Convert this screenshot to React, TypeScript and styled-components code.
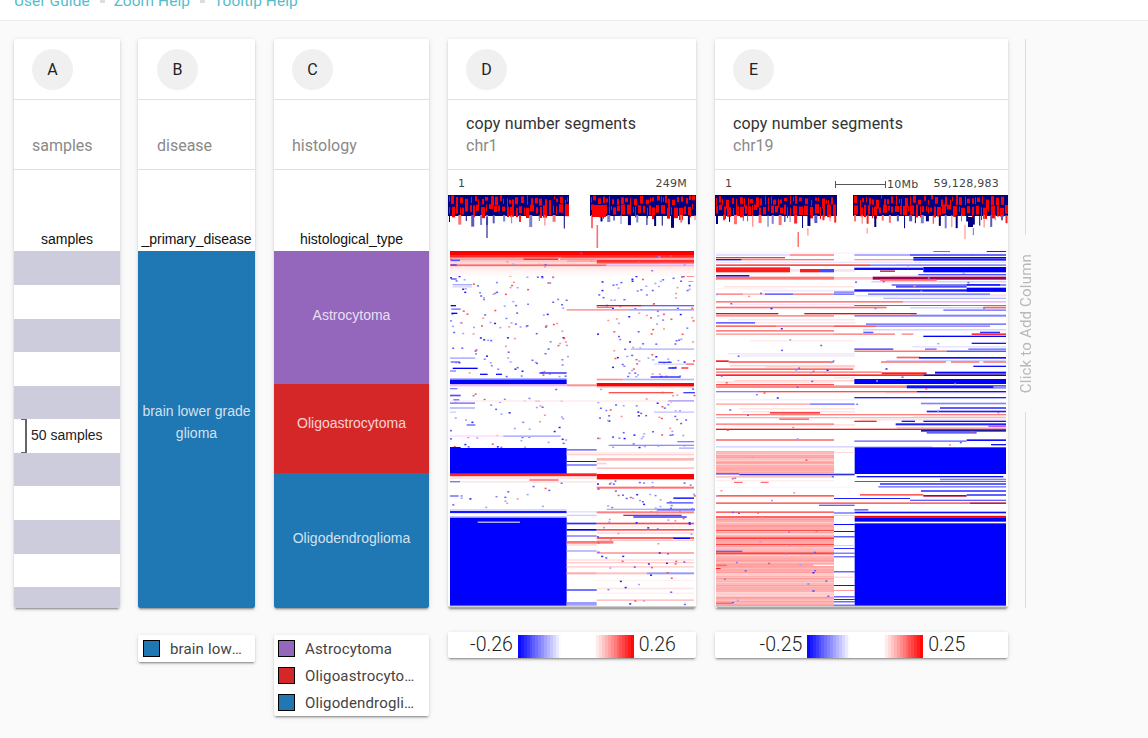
import React from "react";
import styled, { createGlobalStyle } from "styled-components";

type Seg = [number, number, number, number, string];
type Rect = { x: number; y: number; w: number; h: number; c: string };

const Global = createGlobalStyle`
  html, body { margin: 0; padding: 0; background: #fafafa; height: 738px; overflow: hidden; font-family: Roboto, "Liberation Sans", sans-serif; }
`;

const rng = (seed: number) => {
  let s = seed;
  return () => {
    s = (s * 16807) % 2147483647;
    return (s - 1) / 2147483646;
  };
};

const fromZoom = (segs: Seg[], ox: number, oy: number): Rect[] =>
  segs.map(([zy, zh, x0, x1, c]) => ({ x: ox + x0 / 3, y: oy + zy / 3, w: (x1 - x0) / 3, h: zh / 3, c }));

const speckles = (seed: number, n: number, x0: number, x1: number, y0: number, y1: number): Rect[] => {
  const r = rng(seed);
  const cols = ["#2020ff", "#6060ff", "#8080ff", "#a0a0ff", "#ff5050", "#ff9090", "#6060ff", "#a0a0ff"];
  const out: Rect[] = [];
  for (let i = 0; i < n; i++) {
    out.push({ x: x0 + r() * (x1 - x0), y: y0 + r() * (y1 - y0), w: 2, h: 1.5, c: cols[Math.floor(r() * cols.length)] });
  }
  return out;
};

const paleRows = (seed: number, n: number, x0: number, x1: number, y0: number, y1: number, cols: string[]): Rect[] => {
  const r = rng(seed);
  const out: Rect[] = [];
  for (let i = 0; i < n; i++) {
    const a = x0 + r() * (x1 - x0) * 0.4;
    out.push({ x: a, y: Math.round(y0 + r() * (y1 - y0)), w: x1 - a, h: 1.5, c: cols[Math.floor(r() * cols.length)] });
  }
  return out;
};

const track = (seed: number, spans: [number, number][], barEvery: number, extra: Rect[]): Rect[] => {
  const r = rng(seed);
  const out: Rect[] = [];
  const NAVY = "#000080";
  const RED = "#ff0000";
  for (const [a, b] of spans) {
    out.push({ x: a, y: 195, w: b - a, h: 21, c: NAVY });
    let x = a + 1;
    while (x < b - 1) {
      const w = Math.min(1 + Math.floor(r() * 3), b - x);
      const top = 195 + r() * 5;
      out.push({ x, y: top, w, h: 3 + r() * 7, c: RED });
      x += w + 1 + Math.floor(r() * 3);
    }
    x = a + 1;
    while (x < b - 1) {
      const w = Math.min(1 + Math.floor(r() * 4), b - x);
      const top = 204 + r() * 4;
      out.push({ x, y: top, w, h: 4 + r() * 9, c: RED });
      x += w + 1 + Math.floor(r() * 2);
    }
    x = a + 1;
    while (x < b - 1) {
      const pick = ["#000080", "#5a5ac0", "#ff7070", "#000080", "#8080d0", "#ff2020", "#000080"][Math.floor(r() * 7)];
      const w = 1 + Math.floor(r() * 2.4);
      out.push({ x, y: 215, w, h: 5 + r() * 9, c: pick });
      if (r() < 0.1) out.push({ x, y: 228, w: 1, h: 3 + r() * 6, c: r() < 0.5 ? "#ff8080" : "#7070c0" });
      x += w + barEvery * (0.5 + r());
    }
  }
  return out.concat(extra);
};

// Column D, upper part (zoom origin 440,245)
const dUpper: Seg[] = [
  [18, 12, 30, 762, "#ff0000"],
  [30, 6, 30, 762, "#ff2a2a"],
  [36, 4, 30, 362, "#ff7070"],
  [36, 4, 362, 762, "#ff5050"],
  [40, 5, 30, 250, "#ff9a9a"],
  [40, 5, 360, 470, "#ff9090"],
  [40, 5, 250, 355, "#ff3030"],
  [40, 5, 470, 762, "#ffa0a0"],
  [45, 6, 30, 380, "#ffc4c4"],
  [45, 6, 380, 470, "#ffa8a8"],
  [45, 6, 470, 762, "#ff3030"],
  [51, 7, 30, 470, "#ffd8d8"],
  [51, 5, 470, 762, "#ff5050"],
  [58, 5, 30, 500, "#ff6868"],
  [58, 5, 500, 762, "#f0b0ff"],
  [44, 4, 32, 60, "#5050ff"],
  [58, 4, 32, 50, "#4040ff"],
  [63, 4, 30, 762, "#ffd4d4"],
  [67, 6, 30, 762, "#ffe8e8"],
  [73, 6, 30, 762, "#fff0f0"],
  [79, 6, 30, 762, "#fff6f6"],
  [85, 8, 30, 762, "#fffafa"],
  [93, 3, 740, 762, "#ff9090"],
  [100, 4, 33, 50, "#5050ff"],
  [108, 3, 745, 760, "#ff9090"],
  [118, 2, 38, 96, "#8080ff"],
  [120, 8, 38, 96, "#ddddff"],
  [180, 4, 470, 603, "#ff0000"],
  [180, 4, 603, 762, "#6060ff"],
  [180, 4, 32, 48, "#0000ff"],
  [186, 3, 470, 520, "#ff7070"],
  [192, 5, 380, 565, "#ff9c9c"],
  [192, 5, 565, 762, "#a8a8ff"],
  [190, 5, 34, 62, "#8888ff"],
  [203, 4, 34, 52, "#0000ff"],
  [310, 5, 572, 762, "#c0c0ff"],
  [337, 5, 30, 106, "#b4b4ff"],
  [349, 4, 32, 60, "#6060ff"],
  [350, 4, 655, 695, "#4040ff"],
  [355, 5, 642, 738, "#e0e0ff"],
  [355, 5, 738, 762, "#ff8080"],
  [368, 4, 38, 113, "#0000ff"],
  [367, 4, 685, 710, "#0000ff"],
  [367, 4, 724, 745, "#ff2020"],
  [376, 4, 30, 48, "#8080ff"],
  [382, 4, 298, 380, "#2020ff"],
  [386, 4, 120, 143, "#1010ff"],
  [386, 4, 168, 186, "#1010ff"],
  [394, 4, 632, 722, "#2020ff"],
  [400, 4, 30, 380, "#9090ff"],
  [401, 5, 470, 550, "#ff9090"],
  [401, 5, 550, 762, "#b8b8ff"],
  [404, 14, 30, 380, "#0000ff"],
  [414, 10, 470, 762, "#ff0000"],
  [418, 6, 380, 470, "#ff9090"],
  [418, 6, 30, 380, "#f0b8ff"],
  [424, 3, 470, 762, "#ff8080"],
  [429, 4, 30, 52, "#8080ff"],
  [441, 4, 506, 700, "#ff5050"],
  [441, 4, 730, 765, "#4040ff"],
  [449, 5, 30, 62, "#5050ff"],
  [463, 5, 40, 58, "#4040ff"],
  [465, 5, 685, 762, "#3030ff"],
  [466, 4, 30, 762, "#ffeaea"],
  [472, 5, 30, 105, "#8888ff"],
  [487, 4, 30, 105, "#a8a8ff"],
  [499, 5, 30, 48, "#d8d8ff"],
  [499, 5, 642, 762, "#d0d0ff"],
  [538, 4, 80, 106, "#6060ff"],
];

// Column D, lower part (zoom origin 440,430)
const dLower: Seg[] = [
  [16, 4, 30, 190, "#ffd8ff"],
  [16, 5, 190, 362, "#b4b4ff"],
  [33, 4, 712, 762, "#8080ff"],
  [44, 4, 506, 762, "#9090ff"],
  [52, 5, 717, 762, "#b8b8ff"],
  [51, 8, 30, 62, "#0000ff"],
  [54, 80, 30, 380, "#0000ff"],
  [57, 5, 380, 470, "#7878ff"],
  [67, 4, 380, 762, "#ffe4e4"],
  [72, 4, 380, 762, "#ffd0d0"],
  [84, 8, 470, 762, "#ffb4b4"],
  [93, 3, 380, 470, "#1010ff"],
  [98, 5, 470, 500, "#ffd0d0"],
  [103, 4, 380, 470, "#6060ff"],
  [112, 5, 470, 762, "#ffc0c0"],
  [130, 8, 30, 470, "#ff2020"],
  [132, 16, 470, 762, "#ff0000"],
  [138, 4, 30, 470, "#ffc8c8"],
  [143, 4, 30, 470, "#ffe0e0"],
  [147, 6, 268, 356, "#ff8c8c"],
  [153, 5, 30, 470, "#ffe6e6"],
  [153, 4, 30, 60, "#7878ff"],
  [170, 6, 470, 762, "#ff7070"],
  [196, 4, 30, 56, "#6060ff"],
  [202, 5, 700, 762, "#3030ff"],
  [216, 5, 680, 760, "#7070ff"],
  [237, 6, 30, 380, "#d8d8ff"],
  [236, 4, 500, 650, "#b0b0ff"],
  [236, 6, 650, 765, "#7070ff"],
  [243, 7, 30, 380, "#1515ff"],
  [243, 5, 380, 470, "#e4e4ff"],
  [244, 6, 470, 762, "#ff8080"],
  [250, 4, 30, 380, "#ffffff"],
  [254, 4, 550, 725, "#d02060"],
  [258, 5, 30, 380, "#c4c4ff"],
  [254, 4, 380, 470, "#d0d0ff"],
  [259, 4, 580, 740, "#2020ff"],
  [263, 264, 30, 380, "#0000ff"],
  [275, 3, 113, 240, "#ffffff"],
  [278, 5, 380, 470, "#2828ff"],
  [278, 5, 470, 762, "#ff4848"],
  [288, 5, 470, 762, "#fff0f0"],
  [297, 5, 380, 470, "#0000ff"],
  [297, 5, 470, 762, "#ff5050"],
  [307, 4, 470, 762, "#ffd4d4"],
  [316, 4, 380, 470, "#7070ff"],
  [322, 4, 470, 762, "#ff1010"],
  [323, 4, 700, 750, "#0000ff"],
  [329, 4, 470, 762, "#ffc8c8"],
  [333, 8, 380, 520, "#ff7878"],
  [343, 4, 380, 470, "#ffd0d0"],
  [360, 6, 380, 470, "#c0c0ff"],
  [367, 4, 470, 762, "#ff8484"],
  [388, 4, 380, 762, "#ffd8d8"],
  [396, 4, 380, 762, "#ffcccc"],
  [408, 5, 380, 762, "#ffd4d4"],
  [427, 6, 380, 470, "#ffa8a8"],
  [427, 6, 470, 620, "#ffc0c0"],
  [427, 6, 620, 762, "#9898ff"],
  [450, 3, 470, 762, "#fff0f0"],
  [473, 5, 470, 762, "#ffe4e4"],
  [478, 4, 380, 470, "#3030ff"],
  [488, 4, 470, 762, "#ffeeee"],
  [508, 5, 470, 762, "#ffc4c4"],
  [516, 11, 380, 470, "#9c9cff"],
];

// Column E, upper part (zoom origin 710,245)
const eUpper: Seg[] = [
  [18, 3, 670, 720, "#ff4040"],
  [18, 3, 830, 888, "#2020ff"],
  [22, 4, 18, 888, "#fdf0ff"],
  [27, 6, 18, 240, "#e0e0ff"],
  [27, 6, 240, 372, "#ff9c9c"],
  [27, 6, 433, 600, "#b0b0ff"],
  [27, 6, 600, 888, "#6868ff"],
  [36, 4, 18, 225, "#ff3030"],
  [36, 5, 610, 888, "#0000ff"],
  [42, 4, 18, 95, "#1010ff"],
  [42, 4, 95, 372, "#ff7878"],
  [42, 4, 433, 610, "#ff90a0"],
  [42, 5, 610, 888, "#2020ff"],
  [50, 4, 18, 888, "#e8e8ff"],
  [58, 5, 18, 480, "#ff4c4c"],
  [58, 5, 480, 888, "#8888ff"],
  [67, 15, 18, 240, "#ff1c1c"],
  [72, 10, 270, 330, "#ff1c1c"],
  [72, 10, 330, 372, "#4848ff"],
  [68, 7, 433, 640, "#1010ff"],
  [66, 16, 640, 888, "#0000ff"],
  [76, 5, 510, 555, "#c04060"],
  [90, 5, 18, 118, "#0c0cff"],
  [87, 4, 625, 888, "#5050ff"],
  [95, 9, 18, 372, "#ff7474"],
  [96, 8, 372, 488, "#ffc4c4"],
  [95, 9, 488, 888, "#a00050"],
  [104, 4, 510, 680, "#ff8080"],
  [118, 4, 545, 888, "#5050e0"],
  [122, 6, 558, 770, "#4848ff"],
  [117, 5, 770, 870, "#2020ff"],
  [130, 3, 18, 230, "#ffeeee"],
  [133, 7, 433, 888, "#1414ff"],
  [128, 12, 770, 888, "#0000ff"],
  [139, 5, 372, 433, "#9090ff"],
  [145, 5, 18, 100, "#ff9090"],
  [145, 5, 100, 165, "#ffc0c0"],
  [145, 5, 165, 250, "#6a6aff"],
  [145, 5, 250, 372, "#ff8c8c"],
  [145, 5, 372, 433, "#7878ff"],
  [145, 5, 474, 840, "#8484ff"],
  [158, 4, 520, 888, "#b8b8ff"],
  [168, 5, 18, 580, "#ff8080"],
  [168, 5, 580, 888, "#f0b8ff"],
  [180, 3, 433, 720, "#5c5cff"],
  [180, 3, 720, 888, "#ff4c4c"],
  [185, 5, 18, 530, "#ff7070"],
  [185, 5, 820, 888, "#ff6060"],
  [193, 5, 700, 888, "#8888ff"],
  [204, 4, 18, 205, "#ff0000"],
  [204, 4, 283, 620, "#ff0000"],
  [210, 5, 18, 372, "#ff9090"],
  [210, 5, 433, 888, "#8080ff"],
  [231, 5, 18, 135, "#6868ff"],
  [235, 5, 468, 888, "#8080ff"],
  [241, 5, 18, 200, "#ff6c6c"],
  [241, 5, 200, 372, "#ff8c8c"],
  [241, 5, 372, 500, "#ff5c5c"],
  [241, 5, 500, 840, "#a090f0"],
  [255, 5, 18, 372, "#ff8080"],
  [260, 5, 460, 490, "#6060ff"],
  [260, 5, 810, 870, "#3030ff"],
  [265, 5, 18, 372, "#ffa8a8"],
  [265, 5, 372, 555, "#ff9090"],
  [265, 5, 575, 610, "#ff9898"],
  [265, 5, 785, 888, "#ff3030"],
  [272, 4, 640, 888, "#0000ff"],
  [293, 4, 785, 888, "#1414ff"],
  [310, 5, 433, 550, "#6060ff"],
  [310, 5, 645, 680, "#8080ff"],
  [310, 5, 775, 888, "#8080ff"],
  [317, 3, 433, 710, "#ff3030"],
  [317, 3, 710, 888, "#0000ff"],
  [335, 5, 560, 630, "#ff5c5c"],
  [336, 5, 627, 888, "#1010ff"],
  [346, 5, 18, 56, "#ff1c1c"],
  [349, 4, 56, 372, "#ff3c3c"],
  [349, 4, 513, 708, "#ff6060"],
  [349, 4, 723, 808, "#ff6060"],
  [349, 4, 820, 888, "#ff6060"],
  [362, 4, 790, 888, "#1010ff"],
  [370, 5, 18, 430, "#ff6464"],
  [379, 5, 18, 515, "#ff9090"],
  [382, 6, 515, 650, "#ff1c1c"],
  [380, 6, 675, 888, "#0808ff"],
  [388, 5, 18, 640, "#ff2424"],
  [388, 5, 640, 888, "#200090"],
  [396, 4, 18, 372, "#fffafa"],
  [402, 15, 433, 888, "#0000ff"],
  [408, 6, 18, 372, "#ffe4e4"],
  [417, 4, 18, 372, "#ff5050"],
  [421, 8, 18, 590, "#ff8c8c"],
  [421, 9, 590, 888, "#1010ff"],
  [423, 6, 850, 888, "#8888ff"],
  [438, 4, 18, 140, "#8080ff"],
  [438, 4, 140, 620, "#ff4c4c"],
  [438, 4, 620, 888, "#1010ff"],
  [456, 4, 433, 888, "#2020ff"],
  [463, 3, 18, 433, "#f2e8ff"],
  [475, 5, 18, 300, "#ffb4b4"],
  [475, 5, 300, 434, "#8888ff"],
  [473, 5, 633, 888, "#8484ff"],
  [487, 4, 690, 888, "#0c0cff"],
  [497, 5, 650, 888, "#2020ff"],
  [501, 5, 180, 330, "#ff4040"],
  [507, 4, 18, 888, "#ff7c7c"],
  [516, 4, 18, 888, "#ffb8b8"],
  [520, 5, 208, 297, "#ff7070"],
  [527, 4, 433, 500, "#ff2020"],
  [527, 4, 575, 615, "#1010ff"],
  [527, 4, 640, 888, "#1010ff"],
  [535, 5, 18, 372, "#ff9090"],
  [535, 6, 557, 888, "#2020ff"],
  [541, 5, 835, 888, "#c060ff"],
  [551, 4, 18, 888, "#ff1010"],
  [555, 5, 633, 888, "#1c1c90"],
  [560, 6, 650, 800, "#6060ff"],
];

// Column E, lower part (zoom origin 710,430)
const eLower: Seg[] = [
  [28, 4, 18, 372, "#ff5050"],
  [31, 5, 433, 770, "#8484ff"],
  [28, 5, 770, 888, "#1010ff"],
  [42, 4, 843, 888, "#1010ff"],
  [48, 5, 18, 668, "#d8d8ff"],
  [52, 80, 434, 888, "#0000ff"],
  [66, 3, 372, 434, "#ffd8d8"],
  [129, 5, 18, 88, "#6464ff"],
  [131, 5, 88, 434, "#3030e0"],
  [138, 5, 18, 372, "#ffc4c4"],
  [138, 4, 440, 880, "#1010ff"],
  [146, 5, 690, 888, "#8484ff"],
  [153, 3, 434, 888, "#5454ff"],
  [155, 4, 72, 98, "#ff7070"],
  [155, 4, 152, 176, "#ff7070"],
  [150, 4, 18, 372, "#ffeeee"],
  [160, 4, 510, 888, "#1414ff"],
  [168, 5, 505, 888, "#8888ff"],
  [170, 3, 18, 434, "#f8f4ff"],
  [181, 4, 633, 888, "#1414ff"],
  [195, 5, 18, 372, "#ff5c5c"],
  [192, 5, 450, 640, "#ff5c5c"],
  [195, 5, 640, 770, "#b00030"],
  [192, 6, 770, 888, "#6060ff"],
  [204, 3, 372, 600, "#2020ff"],
  [209, 4, 600, 888, "#6060ff"],
  [217, 5, 18, 780, "#ff6868"],
  [217, 5, 780, 888, "#c02040"],
  [224, 4, 327, 434, "#6060ff"],
  [237, 5, 433, 475, "#6868ff"],
  [244, 5, 18, 372, "#ff6868"],
  [247, 4, 372, 434, "#6868ff"],
  [245, 5, 434, 888, "#1010ff"],
  [255, 3, 372, 888, "#ffd0d0"],
  [259, 4, 18, 372, "#ff1818"],
  [258, 4, 434, 888, "#ff0000"],
  [262, 13, 434, 888, "#0000ff"],
  [280, 247, 434, 888, "#0000ff"],
  [282, 3, 372, 434, "#0c0cff"],
  [303, 3, 372, 434, "#0c0cff"],
  [319, 3, 372, 434, "#1010ff"],
  [345, 3, 372, 434, "#ffc0c0"],
  [354, 3, 372, 434, "#3030ff"],
  [368, 3, 372, 434, "#4040ff"],
  [379, 3, 372, 434, "#3030ff"],
  [424, 3, 372, 434, "#2020ff"],
  [440, 3, 372, 434, "#ffc8c8"],
  [465, 3, 372, 434, "#1010ff"],
  [480, 3, 372, 434, "#ff9c9c"],
  [499, 3, 372, 434, "#2020ff"],
  [507, 3, 372, 434, "#2020ff"],
  [514, 3, 372, 434, "#2020ff"],
  [524, 3, 372, 434, "#3030ff"],
];

const salmon = (seed: number, y0: number, y1: number): Rect[] => {
  const r = rng(seed);
  const cols = ["#ffb0b0", "#ffa4a4", "#ffc0c0", "#ffa8a8", "#ffaaaa", "#ffcccc", "#ffb8b8", "#ff9c9c"];
  const out: Rect[] = [];
  for (let y = y0; y < y1; y++) out.push({ x: 716, y, w: 118, h: 1, c: cols[Math.floor(r() * cols.length)] });
  return out;
};

const eSalmonAccents: Seg[] = [
  [300, 3, 18, 372, "#ff5050"],
  [312, 4, 18, 372, "#ffdada"],
  [323, 3, 18, 372, "#ff0000"],
  [342, 3, 18, 372, "#ff4848"],
  [352, 3, 18, 372, "#ffd8d8"],
  [362, 4, 18, 97, "#6060ff"],
  [368, 3, 18, 372, "#ff1010"],
  [404, 4, 310, 372, "#ffffff"],
  [404, 4, 18, 50, "#ff6868"],
  [414, 3, 18, 32, "#ff2020"],
  [488, 3, 18, 372, "#ffe4e4"],
  [496, 3, 18, 372, "#ffe8e8"],
  [518, 3, 18, 66, "#ff4040"],
];

const heatD: Rect[] = [
  ...speckles(11, 125, 450, 567, 275, 376),
  ...speckles(12, 115, 597, 694, 275, 376),
  ...speckles(13, 50, 450, 567, 388, 447),
  ...speckles(14, 60, 597, 694, 388, 447),
  ...speckles(15, 22, 450, 567, 480, 512),
  ...speckles(16, 40, 597, 694, 480, 512),
  ...fromZoom(dUpper, 440, 245),
  ...fromZoom(dLower, 440, 430),
  ...speckles(17, 45, 597, 694, 515, 604),
  ...speckles(18, 14, 450, 694, 251, 272),
  { x: 448, y: 606, w: 248, h: 1, c: "#cfcfcf" },
  { x: 448, y: 607, w: 248, h: 1, c: "#a8a8a8" },
];

const heatE: Rect[] = [
  ...paleRows(31, 22, 716, 855, 255, 445, ["#ffe4e4", "#ffd0d0", "#ffecec", "#f0e8ff"]),
  ...paleRows(32, 14, 855, 1006, 255, 445, ["#e4e4ff", "#d4d4ff", "#ffe4e4"]),
  ...fromZoom(eUpper, 710, 245),
  ...salmon(21, 451, 473),
  ...salmon(22, 518, 606),
  ...fromZoom(eLower, 710, 430),
  ...fromZoom(eSalmonAccents, 710, 430),
  ...speckles(23, 30, 716, 834, 290, 440),
  ...speckles(24, 24, 855, 1006, 251, 445),
  ...speckles(25, 34, 716, 834, 451, 604),
  { x: 715, y: 606, w: 293, h: 1, c: "#cfcfcf" },
  { x: 717, y: 607, w: 291, h: 1, c: "#a8a8a8" },
];

const trackD = track(101, [[448, 569], [590, 696]], 6, [
  { x: 486.5, y: 217, w: 1, h: 21, c: "#000080" },
  { x: 596.5, y: 225, w: 1.6, h: 23, c: "#ff7070" },
  { x: 592, y: 205, w: 14, h: 12, c: "#ff0000" },
]);
const trackE = track(202, [[715, 837], [853, 1008]], 4, [
  { x: 797.5, y: 232, w: 1.5, h: 15, c: "#ff7070" },
  { x: 968, y: 217, w: 5, h: 10, c: "#000080" },
  { x: 964.5, y: 225, w: 1, h: 14, c: "#ff8080" },
]);

const Nav = styled.nav`
  height: 20px;
  background: #fff;
  border-bottom: 1px solid #eee;
  padding-left: 14px;
  display: flex;
  align-items: flex-start;
  overflow: hidden;
`;
const NavLink = styled.a`
  font-size: 15.4px;
  letter-spacing: 0.1px;
  line-height: 22px;
  margin-top: -10px;
  color: #55bccb;
`;
const NavDot = styled.span`
  width: 5px;
  height: 3px;
  background: #ddd;
  margin: 0 9px 0 10px;
`;
const Main = styled.main`
  display: flex;
  align-items: flex-start;
  padding: 18px 0 0 14px;
`;
const Column = styled.section<{ $width: number; $after: number }>`
  width: ${(p) => p.$width}px;
  margin-right: ${(p) => p.$after}px;
  flex: none;
`;
const Card = styled.div`
  background: #fff;
  height: 569px;
  border-radius: 2px;
  box-shadow: 0 2px 2px rgba(0, 0, 0, 0.14), 0 3px 1px -2px rgba(0, 0, 0, 0.2), 0 1px 5px rgba(0, 0, 0, 0.12);
  display: flex;
  flex-direction: column;
  overflow: hidden;
`;
const HeaderRow = styled.div<{ $inset: number }>`
  height: 61px;
  box-sizing: border-box;
  border-bottom: 1px solid #e0e0e0;
  padding: 10px 0 0 ${(p) => p.$inset}px;
  flex: none;
`;
const Avatar = styled.div`
  width: 41px;
  height: 41px;
  border-radius: 50%;
  background: #f0f0f0;
  color: #222;
  font-size: 16px;
  display: flex;
  align-items: center;
  justify-content: center;
`;
const TitleRow = styled.div<{ $inset: number }>`
  height: 70px;
  box-sizing: border-box;
  border-bottom: 1px solid #e0e0e0;
  padding: 0 0 12px ${(p) => p.$inset}px;
  display: flex;
  flex-direction: column;
  justify-content: flex-end;
  flex: none;
  font-size: 16px;
  line-height: 22px;
`;
const Title = styled.div`
  color: #333;
  white-space: nowrap;
  letter-spacing: 0.15px;
`;
const Subtitle = styled.div`
  color: #8a8a8a;
`;
const FieldHead = styled.div`
  height: 81px;
  flex: none;
  display: flex;
  align-items: flex-end;
  justify-content: center;
  padding-bottom: 4px;
  box-sizing: border-box;
  font: 14px/16px "Liberation Sans", Arial, sans-serif;
  letter-spacing: -0.03px;
  color: #111;
`;
const ChartHead = styled.div`
  height: 81px;
  flex: none;
  display: flex;
  flex-direction: column;
  justify-content: flex-end;
`;
const Positions = styled.div`
  height: 14px;
  margin-bottom: 4px;
  padding: 0 9px 0 10px;
  display: flex;
  align-items: center;
  justify-content: space-between;
  font: 11px/14px "DejaVu Sans", sans-serif;
  letter-spacing: 0.25px;
  color: #444;
`;
const ScaleGroup = styled.div`
  display: flex;
  align-items: center;
  margin-left: auto;
  margin-right: 15px;
`;
const ScaleText = styled.span`
  margin-left: 1px;
  position: relative;
  top: 1px;
`;
const Plot = styled.svg`
  display: block;
  flex: none;
  filter: blur(0.4px);
`;
const Bands = styled.div`
  flex: 1;
  display: flex;
  flex-direction: column;
`;
const SampleBand = styled.div<{ $h: number; $tinted: boolean }>`
  height: ${(p) => p.$h}px;
  flex: none;
  box-sizing: border-box;
  background: ${(p) => (p.$tinted ? "#cdccdc" : "#fff")};
  display: flex;
  align-items: stretch;
  padding-left: 7px;
`;
const Bracket = styled.span`
  width: 6px;
  border: solid #666;
  border-width: 1px 2px 1px 0;
  box-sizing: border-box;
  margin-right: 4px;
`;
const SampleCount = styled.span`
  font: 14px/33px "Liberation Sans", sans-serif;
  color: #222;
`;
const CatBand = styled.div<{ $h: number; $color: string; $lift: number }>`
  height: ${(p) => p.$h}px;
  flex: none;
  box-sizing: border-box;
  background: ${(p) => p.$color};
  display: flex;
  align-items: center;
  justify-content: center;
  text-align: center;
  padding-bottom: ${(p) => p.$lift}px;
  color: rgba(255, 255, 255, 0.8);
  font: 14px/22px "Liberation Sans", Arial, sans-serif;
`;
const Legend = styled.div<{ $top: number }>`
  margin-top: ${(p) => p.$top}px;
  background: #fff;
  border-radius: 2px;
  box-shadow: 0 2px 2px rgba(0, 0, 0, 0.14), 0 3px 1px -2px rgba(0, 0, 0, 0.2), 0 1px 5px rgba(0, 0, 0, 0.12);
`;
const CatRow = styled.div<{ $left: number }>`
  height: 27px;
  box-sizing: border-box;
  display: flex;
  align-items: center;
  padding: 0 9px 0 ${(p) => p.$left}px;
`;
const Swatch = styled.span<{ $color: string }>`
  width: 17px;
  height: 17px;
  flex: none;
  box-sizing: border-box;
  border: 1px solid #000;
  background: ${(p) => p.$color};
  margin-right: 10px;
`;
const CatName = styled.span`
  flex: 1;
  min-width: 0;
  font-size: 15px;
  letter-spacing: 0.15px;
  color: #444;
  white-space: nowrap;
  overflow: hidden;
  text-overflow: ellipsis;
`;

const steps = (() => {
  const out: string[] = [];
  const n = 40;
  for (let i = 0; i < n; i++) {
    const t = (i + 0.5) / n;
    let c = "#fff";
    if (t < 0.37) {
      const v = Math.round((t / 0.37) * 255);
      c = `rgb(${v},${v},255)`;
    } else if (t > 0.66) {
      const v = Math.round(((1 - t) / 0.34) * 255);
      c = `rgb(255,${v},${v})`;
    }
    out.push(`${c} ${(i / n) * 100}% ${((i + 1) / n) * 100}%`);
  }
  return `linear-gradient(to right, ${out.join(",")})`;
})();

const ScaleLegend = styled.div`
  height: 26px;
  padding-left: 2px;
  display: flex;
  align-items: flex-end;
  justify-content: center;
  font-size: 19.5px;
  font-weight: 300;
  color: #222;
`;
const ScaleValue = styled.span`
  line-height: 26px;
`;
const ScaleBar = styled.div`
  width: 116px;
  height: 23px;
  margin: 0 5px;
  background: ${steps};
`;
const AddColumn = styled.div`
  width: 1px;
  height: 569px;
  margin-left: 17px;
  display: flex;
  flex-direction: column;
  align-items: center;
`;
const AddLine = styled.div`
  flex: 1;
  width: 1px;
  background: #ddd;
`;
const AddLabel = styled.div`
  writing-mode: vertical-rl;
  transform: rotate(180deg);
  white-space: nowrap;
  font-size: 15px;
  line-height: 16px;
  letter-spacing: 0.2px;
  color: #b8b8b8;
  padding: 19px 0;
  flex: none;
`;

const Rects = ({ items }: { items: Rect[] }) => (
  <>
    {items.map((r, i) => (
      <rect key={i} x={r.x} y={r.y} width={r.w} height={r.h} fill={r.c} />
    ))}
  </>
);

const sampleBands = [34, 34, 33, 34, 33, 34, 33, 34, 34, 33, 21];

const Head = ({ letter, title, sub, inset = 18 }: { letter: string; title?: string; sub: string; inset?: number }) => (
  <>
    <HeaderRow $inset={inset}>
      <Avatar>{letter}</Avatar>
    </HeaderRow>
    <TitleRow $inset={inset}>
      {title && <Title>{title}</Title>}
      <Subtitle>{sub}</Subtitle>
    </TitleRow>
  </>
);

export default function App() {
  return (
    <>
      <Global />
      <Nav>
        <NavLink>User Guide</NavLink>
        <NavDot />
        <NavLink>Zoom Help</NavLink>
        <NavDot />
        <NavLink>Tooltip Help</NavLink>
      </Nav>
      <Main>
        <Column $width={106} $after={18}>
          <Card>
            <Head letter="A" sub="samples" />
            <FieldHead>samples</FieldHead>
            <Bands>
              {sampleBands.map((h, i) => (
                <SampleBand key={i} $h={h} $tinted={i % 2 === 0}>
                  {i === 5 && (
                    <>
                      <Bracket />
                      <SampleCount>50 samples</SampleCount>
                    </>
                  )}
                </SampleBand>
              ))}
            </Bands>
          </Card>
        </Column>
        <Column $width={117} $after={19}>
          <Card>
            <Head letter="B" sub="disease" inset={19} />
            <FieldHead>_primary_disease</FieldHead>
            <Bands>
              <CatBand $h={357} $color="#1f77b4" $lift={15}>
                brain lower grade
                <br />
                glioma
              </CatBand>
            </Bands>
          </Card>
          <Legend $top={27}>
            <CatRow $left={5}>
              <Swatch $color="#1f77b4" />
              <CatName>brain lower grade glioma</CatName>
            </CatRow>
          </Legend>
        </Column>
        <Column $width={155} $after={19}>
          <Card>
            <Head letter="C" sub="histology" />
            <FieldHead>histological_type</FieldHead>
            <Bands>
              <CatBand $h={133} $color="#9467bd" $lift={5}>Astrocytoma</CatBand>
              <CatBand $h={89} $color="#d62728" $lift={11}>Oligoastrocytoma</CatBand>
              <CatBand $h={135} $color="#1f77b4" $lift={5}>Oligodendroglioma</CatBand>
            </Bands>
          </Card>
          <Legend $top={27}>
            <CatRow $left={4}>
              <Swatch $color="#9467bd" />
              <CatName>Astrocytoma</CatName>
            </CatRow>
            <CatRow $left={4}>
              <Swatch $color="#d62728" />
              <CatName>Oligoastrocytoma</CatName>
            </CatRow>
            <CatRow $left={4}>
              <Swatch $color="#1f77b4" />
              <CatName>Oligodendroglioma</CatName>
            </CatRow>
          </Legend>
        </Column>
        <Column $width={248} $after={19}>
          <Card>
            <Head letter="D" title="copy number segments" sub="chr1" />
            <ChartHead>
              <Positions>
                <span>1</span>
                <span>249M</span>
              </Positions>
              <Plot width={248} height={56} viewBox="448 195 248 56">
                <Rects items={trackD} />
              </Plot>
            </ChartHead>
            <Plot width={248} height={357} viewBox="448 251 248 357">
              <Rects items={heatD} />
            </Plot>
          </Card>
          <Legend $top={24}>
            <ScaleLegend>
              <ScaleValue>-0.26</ScaleValue>
              <ScaleBar />
              <ScaleValue>0.26</ScaleValue>
            </ScaleLegend>
          </Legend>
        </Column>
        <Column $width={293} $after={0}>
          <Card>
            <Head letter="E" title="copy number segments" sub="chr19" />
            <ChartHead>
              <Positions>
                <span>1</span>
                <ScaleGroup>
                  <svg width="51" height="9" viewBox="0 0 51 9">
                    <path d="M0.5 1v7M0.5 4.5h50M50.5 1v7" stroke="#555" strokeWidth="1" fill="none" />
                  </svg>
                  <ScaleText>10Mb</ScaleText>
                </ScaleGroup>
                <span>59,128,983</span>
              </Positions>
              <Plot width={293} height={56} viewBox="715 195 293 56">
                <Rects items={trackE} />
              </Plot>
            </ChartHead>
            <Plot width={293} height={357} viewBox="715 251 293 357">
              <Rects items={heatE} />
            </Plot>
          </Card>
          <Legend $top={24}>
            <ScaleLegend>
              <ScaleValue>-0.25</ScaleValue>
              <ScaleBar />
              <ScaleValue>0.25</ScaleValue>
            </ScaleLegend>
          </Legend>
        </Column>
        <AddColumn>
          <AddLine />
          <AddLabel>Click to Add Column</AddLabel>
          <AddLine />
        </AddColumn>
      </Main>
    </>
  );
}
